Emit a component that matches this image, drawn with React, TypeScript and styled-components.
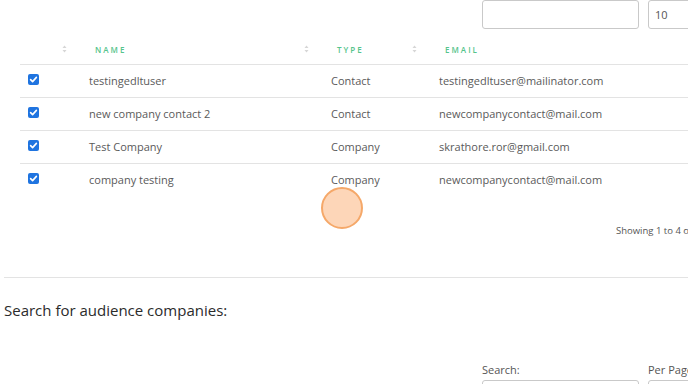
import styled, { createGlobalStyle } from 'styled-components'

const GlobalStyle = createGlobalStyle`
  html, body {
    margin: 0;
    padding: 0;
    background: #fff;
    overflow: hidden;
  }
  body {
    font-family: 'Open Sans', 'Liberation Sans', sans-serif;
    color: #555;
  }
`

interface Entry {
  name: string
  type: string
  email: string
}

const ENTRIES: Entry[] = [
  { name: 'testingedltuser', type: 'Contact', email: 'testingedltuser@mailinator.com' },
  { name: 'new company contact 2', type: 'Contact', email: 'newcompanycontact@mail.com' },
  { name: 'Test Company', type: 'Company', email: 'skrathore.ror@gmail.com' },
  { name: 'company testing', type: 'Company', email: 'newcompanycontact@mail.com' }
]

const COLUMNS = '61px 242px 108px 1fr'

function SortIcon() {
  return (
    <SortGlyph width="5" height="8" viewBox="0 0 5 8">
      <path d="M2.5 0.5 L4.5 3 L0.5 3 Z" fill="#d6d6d6" />
      <path d="M2.5 7.5 L4.5 5 L0.5 5 Z" fill="#d6d6d6" />
    </SortGlyph>
  )
}

function CheckMark() {
  return (
    <Check>
      <svg width="11" height="11" viewBox="0 0 11 11">
        <path d="M2.6 5.6 L4.6 7.6 L8.4 3.4" stroke="#fff" strokeWidth="1.6" fill="none" strokeLinecap="round" strokeLinejoin="round" />
      </svg>
    </Check>
  )
}

export default function App() {
  return (
    <>
      <GlobalStyle />
      <Page>
        <Controls>
          <SearchBox />
          <PerPageBox>10</PerPageBox>
        </Controls>

        <Table>
          <HeadRow>
            <HeadCell><span /><SortIcon /></HeadCell>
            <HeadCell><Label>Name</Label><SortIcon /></HeadCell>
            <HeadCell><Label>Type</Label><SortIcon /></HeadCell>
            <HeadCell><Label>Email</Label></HeadCell>
          </HeadRow>
          {ENTRIES.map((e, i) => (
            <BodyRow key={i} $last={i === ENTRIES.length - 1}>
              <CheckCell><CheckMark /></CheckCell>
              <Cell>{e.name}</Cell>
              <Cell>{e.type}</Cell>
              <Cell>{e.email}</Cell>
            </BodyRow>
          ))}
        </Table>

        <Info>Showing 1 to 4 of 4 entries</Info>

        <Divider />

        <Heading>Search for audience companies:</Heading>

        <FieldRow>
          <Field $width={157}>
            <FieldLabel>Search:</FieldLabel>
            <FieldInput />
          </Field>
          <Field $width={100}>
            <FieldLabel>Per Page:</FieldLabel>
            <FieldInput />
          </Field>
        </FieldRow>

        <ClickMarker />
      </Page>
    </>
  )
}

const Page = styled.div`
  position: relative;
  width: 744px;
  height: 384px;
  padding-left: 4px;
`

const Controls = styled.div`
  display: flex;
  gap: 9px;
  padding-left: 478px;
  height: 29px;
`

const SearchBox = styled.div`
  width: 157px;
  height: 29px;
  box-sizing: border-box;
  border: 1px solid #c9c9c9;
  border-radius: 3px;
`

const PerPageBox = styled.div`
  width: 100px;
  height: 29px;
  box-sizing: border-box;
  border: 1px solid #c9c9c9;
  border-radius: 3px;
  padding-left: 6px;
  display: flex;
  align-items: center;
  font-size: 11px;
  color: #555;
`

const Table = styled.div`
  margin: 5px 0 0 16px;
`

const HeadRow = styled.div`
  display: grid;
  grid-template-columns: ${COLUMNS};
  height: 30px;
  border-bottom: 1px solid #e3e3e3;
`

const HeadCell = styled.div`
  display: flex;
  align-items: center;
  justify-content: space-between;
  padding: 0 14px 0 14px;
`

const Label = styled.span`
  font-size: 8px;
  font-weight: 600;
  letter-spacing: 2px;
  text-transform: uppercase;
  color: #55c48c;
`

const SortGlyph = styled.svg`
  display: block;
`

const BodyRow = styled.div<{ $last: boolean }>`
  display: grid;
  grid-template-columns: ${COLUMNS};
  height: 32px;
  border-bottom: ${p => (p.$last ? 'none' : '1px solid #e3e3e3')};
`

const Cell = styled.div`
  display: flex;
  align-items: center;
  padding-left: 8px;
  padding-bottom: 1px;
  font-size: 11px;
  color: #5a5a5a;
  white-space: nowrap;
`

const CheckCell = styled.div`
  display: flex;
  align-items: center;
  padding-left: 8px;
  padding-bottom: 3px;
`

const Check = styled.span`
  display: flex;
  width: 11px;
  height: 11px;
  border-radius: 2px;
  background: #1f74e0;
`

const Info = styled.div`
  margin-top: 28px;
  padding-left: 612px;
  font-size: 9.5px;
  color: #555;
  white-space: nowrap;
`

const Divider = styled.hr`
  margin: 40px 0 0 0;
  border: none;
  border-top: 1px solid #e3e3e3;
`

const Heading = styled.h3`
  margin: 22px 0 0 0;
  font-size: 15px;
  font-weight: 500;
  color: #2b2b2b;
`

const FieldRow = styled.div`
  display: flex;
  gap: 9px;
  padding-left: 478px;
  margin-top: 42px;
`

const Field = styled.div<{ $width: number }>`
  width: ${p => p.$width}px;
  display: flex;
  flex-direction: column;
  gap: 3px;
`

const FieldLabel = styled.span`
  font-size: 11px;
  color: #555;
  white-space: nowrap;
`

const FieldInput = styled.div`
  height: 29px;
  box-sizing: border-box;
  border: 1px solid #c9c9c9;
  border-radius: 3px;
`

const ClickMarker = styled.div`
  position: absolute;
  left: 321px;
  top: 187px;
  width: 42px;
  height: 42px;
  box-sizing: border-box;
  border-radius: 50%;
  background: rgba(252, 200, 160, 0.75);
  border: 2px solid #f5a869;
`
